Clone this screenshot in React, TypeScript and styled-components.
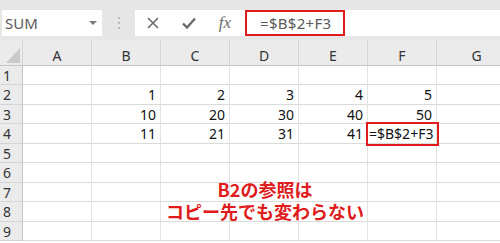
import React from 'react'
import styled, { createGlobalStyle } from 'styled-components'

const GlobalStyle = createGlobalStyle`
  html, body {
    margin: 0;
    padding: 0;
    background: #ffffff;
    overflow: hidden;
  }
  * {
    box-sizing: border-box;
  }
`

const COLS = ['A', 'B', 'C', 'D', 'E', 'F', 'G']
const ROW_HEIGHTS = [19, 20, 19, 20, 19, 20, 19, 20, 19]

const cells: Record<string, string> = {
  B2: '1', C2: '2', D2: '3', E2: '4', F2: '5',
  B3: '10', C3: '20', D3: '30', E3: '40', F3: '50',
  B4: '11', C4: '21', D4: '31', E4: '41', F4: '=$B$2+F3',
}

const Page = styled.div`
  position: relative;
  width: 500px;
  height: 243px;
  overflow: hidden;
  background: #ffffff;
  font-family: 'Noto Sans', 'Liberation Sans', sans-serif;
`

const Toolbar = styled.div`
  height: 40px;
  background: #e6e6e6;
  display: flex;
  align-items: flex-start;
  padding: 10px 0 0 2px;
`

const NameBox = styled.div`
  width: 100px;
  height: 26px;
  background: #ffffff;
  display: flex;
  align-items: center;
  justify-content: space-between;
  padding: 0 5px 0 3px;
  color: #5a5a5a;
  font-size: 15px;
`

const DropArrow = styled.span`
  width: 0;
  height: 0;
  border-left: 4px solid transparent;
  border-right: 4px solid transparent;
  border-top: 4px solid #7a7a7a;
`

const Grip = styled.div`
  width: 33px;
  height: 26px;
  display: flex;
  flex-direction: column;
  align-items: center;
  justify-content: center;
  gap: 3px;
`

const GripDot = styled.span`
  width: 2px;
  height: 2px;
  background: #b9b9b9;
`

const FormulaBar = styled.div`
  flex: 1;
  height: 26px;
  background: #ffffff;
  display: flex;
  align-items: center;
`

const IconButton = styled.div`
  width: 36px;
  height: 26px;
  display: flex;
  align-items: center;
  justify-content: center;
  color: #6b6b6b;
`

const Fx = styled.span`
  font-family: 'Liberation Serif', 'DejaVu Serif', serif;
  font-style: italic;
  font-size: 17px;
  color: #6b6b6b;
`

const FormulaInput = styled.div`
  margin-left: 2px;
  width: 100px;
  height: 26px;
  border: 2px solid #e01b1b;
  display: flex;
  align-items: center;
  padding-left: 13px;
  color: #5a5a5a;
  font-size: 15px;
  letter-spacing: 0.3px;
`

const Sheet = styled.div`
  display: grid;
  grid-template-columns: 23px repeat(6, 69px) 80px;
  grid-template-rows: 26px ${ROW_HEIGHTS.map((h) => `${h}px`).join(' ')};
  background: #ffffff;
`

const Corner = styled.div`
  background: #ebebeb;
  border-right: 1px solid #d4d4d4;
  border-bottom: 1px solid #c6c6c6;
  display: flex;
  align-items: flex-end;
  justify-content: flex-end;
  padding: 0 2px 2px 0;
`

const CornerTri = styled.span`
  width: 0;
  height: 0;
  border-left: 14px solid transparent;
  border-bottom: 15px solid #c9c9c9;
`

const ColHead = styled.div`
  background: #ebebeb;
  border-right: 1px solid #d4d4d4;
  border-bottom: 1px solid #c6c6c6;
  display: flex;
  align-items: center;
  justify-content: center;
  padding-top: 6px;
  color: #333333;
  font-size: 14px;
`

const RowHead = styled.div`
  background: #ebebeb;
  border-right: 1px solid #c6c6c6;
  border-bottom: 1px solid #d4d4d4;
  display: flex;
  align-items: center;
  justify-content: flex-start;
  padding-left: 3px;
  color: #333333;
  font-size: 14px;
`

const Cell = styled.div<{ $highlight?: boolean; $text?: boolean }>`
  border-right: 1px solid #e2e2e2;
  border-bottom: 1px solid #dadada;
  display: flex;
  align-items: center;
  justify-content: ${({ $text }) => ($text ? 'flex-start' : 'flex-end')};
  padding: ${({ $text }) => ($text ? '0 0 0 1px' : '0 4px 0 0')};
  color: #111111;
  font-size: 14px;
  white-space: nowrap;
  outline: ${({ $highlight }) => ($highlight ? '2px solid #e01b1b' : 'none')};
  position: relative;
  z-index: ${({ $highlight }) => ($highlight ? 1 : 0)};
`

const Note = styled.div`
  position: absolute;
  left: 30px;
  right: 0;
  top: 178px;
  display: flex;
  flex-direction: column;
  align-items: center;
  color: #e01b1b;
  font-family: 'Noto Sans CJK JP', 'Noto Sans', sans-serif;
  font-weight: 700;
  font-size: 18px;
`

const NoteLine = styled.div`
  height: 22px;
  line-height: 22px;
  white-space: nowrap;
`

const CrossIcon = () => (
  <svg width="14" height="14" viewBox="0 0 14 14">
    <path d="M2 2 L12 12 M12 2 L2 12" stroke="#6b6b6b" strokeWidth="1.6" fill="none" />
  </svg>
)

const CheckIcon = () => (
  <svg width="16" height="14" viewBox="0 0 16 14">
    <path d="M2 7.5 L6 11.5 L14 2.5" stroke="#6b6b6b" strokeWidth="2.4" fill="none" />
  </svg>
)

export default function App() {
  return (
    <Page>
      <GlobalStyle />
      <Toolbar>
        <NameBox>
          <span>SUM</span>
          <DropArrow />
        </NameBox>
        <Grip>
          <GripDot />
          <GripDot />
          <GripDot />
        </Grip>
        <FormulaBar>
          <IconButton>
            <CrossIcon />
          </IconButton>
          <IconButton>
            <CheckIcon />
          </IconButton>
          <IconButton>
            <Fx>fx</Fx>
          </IconButton>
          <FormulaInput>=$B$2+F3</FormulaInput>
        </FormulaBar>
      </Toolbar>
      <Sheet>
        <Corner>
          <CornerTri />
        </Corner>
        {COLS.map((c) => (
          <ColHead key={c}>{c}</ColHead>
        ))}
        {ROW_HEIGHTS.map((_, i) => {
          const row = i + 1
          return (
            <React.Fragment key={row}>
              <RowHead>{row}</RowHead>
              {COLS.map((c) => {
                const id = `${c}${row}`
                const v = cells[id]
                const isText = !!v && v.startsWith('=')
                return (
                  <Cell key={id} $text={isText} $highlight={id === 'F4'}>
                    {v}
                  </Cell>
                )
              })}
            </React.Fragment>
          )
        })}
      </Sheet>
      <Note>
        <NoteLine>B2の参照は</NoteLine>
        <NoteLine>コピー先でも変わらない</NoteLine>
      </Note>
    </Page>
  )
}
